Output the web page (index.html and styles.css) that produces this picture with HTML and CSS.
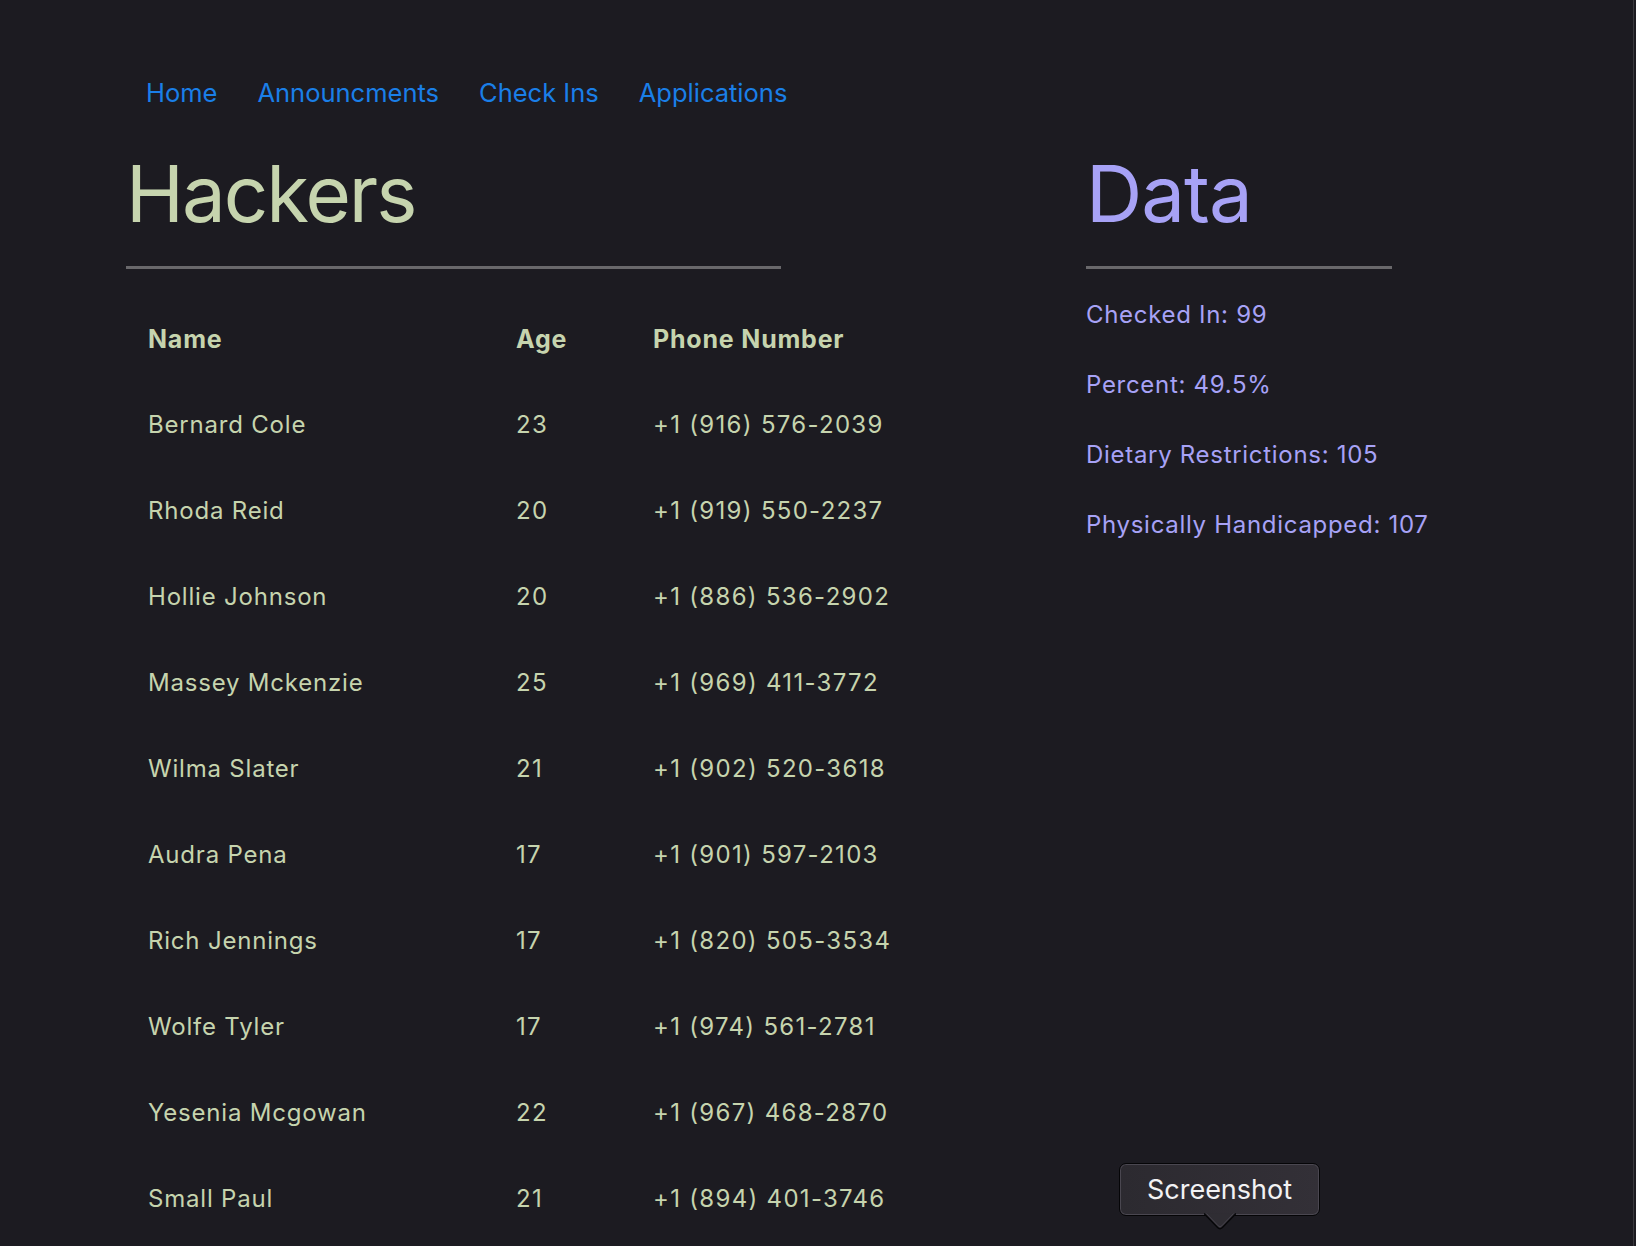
FILE: index.html
```html
<!DOCTYPE html>
<html lang="en">
<head>
<meta charset="utf-8">
<title>Hackers</title>
<link rel="stylesheet" href="styles.css">
</head>
<body>
<div class="page">
  <nav class="nav">
    <a class="nav-link" href="#">Home</a>
    <a class="nav-link" href="#">Announcments</a>
    <a class="nav-link" href="#">Check Ins</a>
    <a class="nav-link" href="#">Applications</a>
  </nav>
  <main class="columns">
    <section class="hackers">
      <h1 class="title title-green">Hackers</h1>
      <div class="rule rule-wide"></div>
      <table class="people">
        <colgroup>
          <col class="col-name">
          <col class="col-age">
          <col class="col-phone">
        </colgroup>
        <thead>
          <tr><th>Name</th><th>Age</th><th>Phone Number</th></tr>
        </thead>
        <tbody>
          <tr><td>Bernard Cole</td><td class="num">23</td><td class="num">+1 (916) 576-2039</td></tr>
          <tr><td>Rhoda Reid</td><td class="num">20</td><td class="num">+1 (919) 550-2237</td></tr>
          <tr><td>Hollie Johnson</td><td class="num">20</td><td class="num">+1 (886) 536-2902</td></tr>
          <tr><td>Massey Mckenzie</td><td class="num">25</td><td class="num">+1 (969) 411-3772</td></tr>
          <tr><td>Wilma Slater</td><td class="num">21</td><td class="num">+1 (902) 520-3618</td></tr>
          <tr><td>Audra Pena</td><td class="num">17</td><td class="num">+1 (901) 597-2103</td></tr>
          <tr><td>Rich Jennings</td><td class="num">17</td><td class="num">+1 (820) 505-3534</td></tr>
          <tr><td>Wolfe Tyler</td><td class="num">17</td><td class="num">+1 (974) 561-2781</td></tr>
          <tr><td>Yesenia Mcgowan</td><td class="num">22</td><td class="num">+1 (967) 468-2870</td></tr>
          <tr><td>Small Paul</td><td class="num">21</td><td class="num">+1 (894) 401-3746</td></tr>
        </tbody>
      </table>
    </section>
    <aside class="data">
      <h1 class="title title-purple">Data</h1>
      <div class="rule rule-narrow"></div>
      <ul class="stats">
        <li>Checked In: 99</li>
        <li>Percent: 49.5%</li>
        <li>Dietary Restrictions: 105</li>
        <li>Physically Handicapped: 107</li>
      </ul>
    </aside>
  </main>
</div>
<div class="tooltip">Screenshot<svg class="tooltip-arrow" viewBox="0 0 32 17" width="32" height="17" aria-hidden="true"><path d="M0 0.5 L13.6 14.6 Q16 17 18.4 14.6 L32 0.5 Z" fill="#2f2d33"/><path d="M0 0.5 L13.6 14.6 Q16 17 18.4 14.6 L32 0.5" fill="none" stroke="#060608" stroke-width="1.4"/><path d="M2.5 0.5 L14.2 12.8 Q16 14.6 17.8 12.8 L29.5 0.5" fill="none" stroke="#45424b" stroke-width="1"/></svg></div>
<div class="window-edge"></div>
</body>
</html>
```
FILE: styles.css
```css
html, body {
  margin: 0;
  padding: 0;
  height: 100%;
  overflow: hidden;
}

body {
  background: #1c1b21;
  font-family: Inter, "Noto Sans", "Liberation Sans", sans-serif;
  color: #c6d4ae;
}

.page {
  padding: 77px 0 0 126px;
}

.nav {
  display: flex;
  height: 32px;
}

.nav-link {
  color: #1a7fe8;
  text-decoration: none;
  font-size: 25.5px;
  line-height: 32px;
  padding: 0 20px;
}

.columns {
  display: flex;
  margin-top: 46px;
}

.hackers {
  width: 960px;
  flex: none;
}

.data {
  flex: 1;
}

.title {
  margin: 0;
  font-size: 78px;
  line-height: 78px;
  font-weight: 400;
  letter-spacing: -1px;
}

.title-green {
  color: #c6d4ae;
  letter-spacing: -2px;
}

.title-purple {
  color: #a7a2f6;
}

.rule {
  height: 3px;
  background: #69686b;
  margin-top: 33px;
}

.rule-wide {
  width: 655px;
}

.rule-narrow {
  width: 306px;
}

.people {
  border-collapse: collapse;
  margin-top: 27px;
  table-layout: fixed;
  width: 860px;
}

.col-name {
  width: 368px;
}

.col-age {
  width: 137px;
}

.people th,
.people td {
  text-align: left;
  padding: 0 0 0 22px;
  height: 86px;
  vertical-align: middle;
  white-space: nowrap;
  color: #c6d4ae;
}

.people th {
  height: 85px;
  font-size: 25px;
  font-weight: 700;
  letter-spacing: 0.8px;
}

.people td {
  font-size: 24px;
  font-weight: 400;
  letter-spacing: 0.8px;
}

.people td.num {
  letter-spacing: 1.3px;
}

.stats {
  list-style: none;
  margin: 30px 0 0;
  padding: 0;
  color: #a7a2f6;
  font-size: 24px;
  letter-spacing: 0.7px;
}

.stats li {
  height: 70px;
  line-height: 32px;
}

.tooltip {
  position: absolute;
  left: 1119px;
  top: 1163px;
  width: 201px;
  height: 53px;
  box-sizing: border-box;
  border-radius: 7px;
  border: 1px solid #050507;
  box-shadow: inset 0 0 0 1px #4a4750;
  background: linear-gradient(90deg, #2c2a30, #333037);
  color: #f2f2f4;
  font-size: 27px;
  line-height: 51px;
  text-align: center;
}

.tooltip-arrow {
  position: absolute;
  left: 50%;
  top: 100%;
  margin-left: -16px;
  margin-top: -2px;
  display: block;
}

.window-edge {
  position: fixed;
  top: 0;
  bottom: 0;
  right: 2px;
  width: 1px;
  background: #3a393e;
}
```
